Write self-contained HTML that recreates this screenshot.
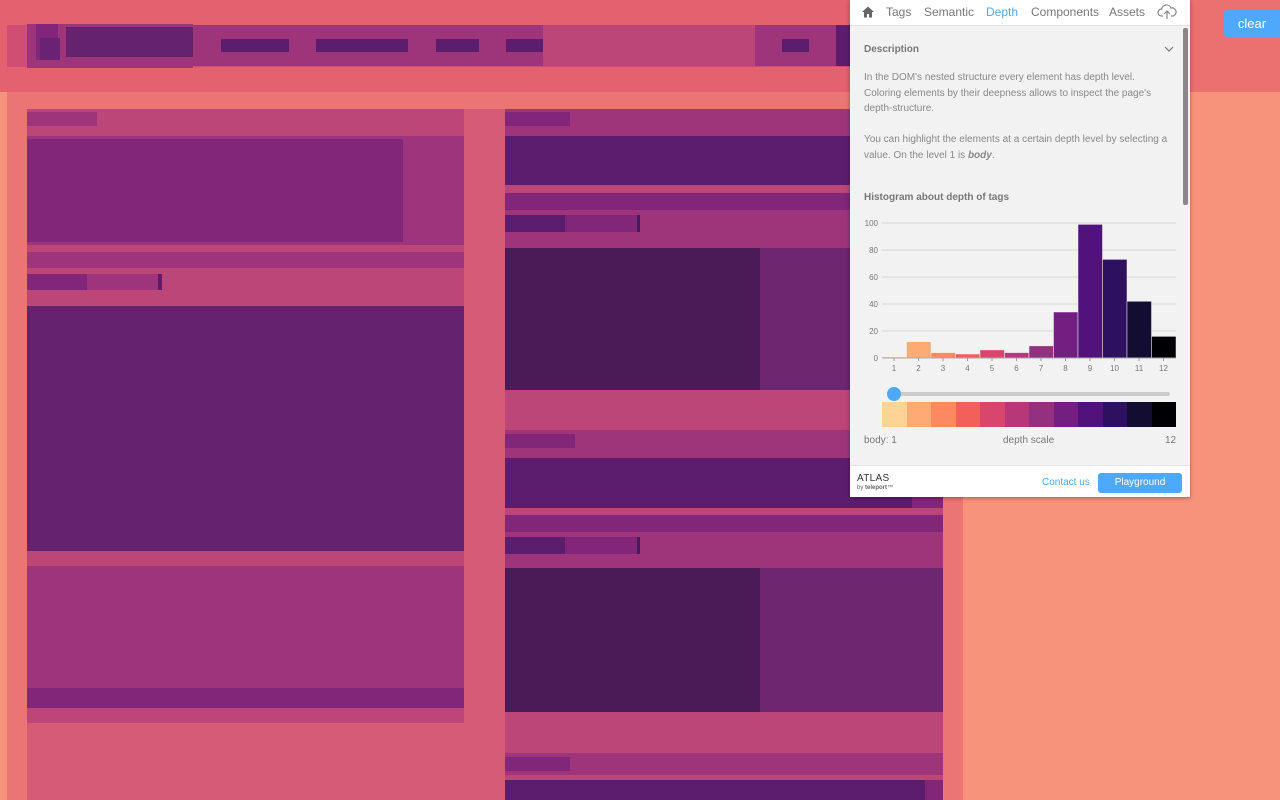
<!DOCTYPE html>
<html><head><meta charset="utf-8"><style>
*{margin:0;padding:0;box-sizing:border-box}
body{width:1280px;height:800px;overflow:hidden;position:relative;background:#f7937a;font-family:"Liberation Sans",Arial,sans-serif}
.a{position:absolute}
.p{position:absolute;font-size:11px;color:#777}
</style></head><body>
<div class="a" style="left:0;top:0;width:1280px;height:92px;background:#eb7070"></div>
<div class="a" style="left:0;top:0;width:850px;height:92px;background:#e4616f"></div>
<div class="a" style="left:7px;top:92px;width:956px;height:708px;background:#eb7474"></div>
<div class="a" style="left:27px;top:109px;width:916px;height:691px;background:#d55b76"></div>
<div class="a" style="left:7px;top:25px;width:843px;height:42px;background:#d04e74"></div>
<div class="a" style="left:27px;top:24px;width:166px;height:44px;background:#9e357b"></div>
<div class="a" style="left:36px;top:24px;width:22px;height:36px;background:#82267a"></div>
<div class="a" style="left:40px;top:38px;width:20px;height:22px;background:#6a2374"></div>
<div class="a" style="left:66px;top:27px;width:128px;height:30px;background:#65226e"></div>
<div class="a" style="left:193px;top:25px;width:350px;height:41px;background:#9e357b"></div>
<div class="a" style="left:221px;top:39px;width:68px;height:13px;background:#5d1d6e"></div>
<div class="a" style="left:316px;top:39px;width:92px;height:13px;background:#5d1d6e"></div>
<div class="a" style="left:436px;top:39px;width:43px;height:13px;background:#5d1d6e"></div>
<div class="a" style="left:506px;top:39px;width:37px;height:13px;background:#5d1d6e"></div>
<div class="a" style="left:543px;top:25px;width:212px;height:41px;background:#bb4677"></div>
<div class="a" style="left:755px;top:25px;width:81px;height:41px;background:#9e357b"></div>
<div class="a" style="left:782px;top:39px;width:27px;height:13px;background:#5d1d6e"></div>
<div class="a" style="left:836px;top:25px;width:14px;height:41px;background:#5d1d6e"></div>
<div class="a" style="left:27px;top:109px;width:437px;height:614px;background:#bb4677"></div>
<div class="a" style="left:27px;top:112px;width:70px;height:14px;background:#9e357b"></div>
<div class="a" style="left:27px;top:136px;width:437px;height:109px;background:#9e357c"></div>
<div class="a" style="left:27px;top:139px;width:376px;height:103px;background:#82267a"></div>
<div class="a" style="left:27px;top:252px;width:437px;height:16px;background:#9e357c"></div>
<div class="a" style="left:27px;top:274px;width:60px;height:16px;background:#82267a"></div>
<div class="a" style="left:87px;top:274px;width:71px;height:16px;background:#9e357c"></div>
<div class="a" style="left:158px;top:274px;width:4px;height:16px;background:#5d1d6e"></div>
<div class="a" style="left:27px;top:306px;width:437px;height:245px;background:#65226e"></div>
<div class="a" style="left:27px;top:566px;width:437px;height:122px;background:#9e357c"></div>
<div class="a" style="left:27px;top:688px;width:437px;height:20px;background:#82267a"></div>
<div class="a" style="left:505px;top:109px;width:438px;height:691px;background:#bb4677"></div>
<div class="a" style="left:505px;top:109px;width:438px;height:27px;background:#9e357b"></div>
<div class="a" style="left:505px;top:112px;width:65px;height:14px;background:#82267a"></div>
<div class="a" style="left:505px;top:136px;width:438px;height:49px;background:#5d1d6e"></div>
<div class="a" style="left:505px;top:193px;width:438px;height:17px;background:#82267a"></div>
<div class="a" style="left:505px;top:210px;width:438px;height:38px;background:#9e357b"></div>
<div class="a" style="left:505px;top:215px;width:60px;height:17px;background:#5d1d6e"></div>
<div class="a" style="left:565px;top:215px;width:72px;height:17px;background:#82267a"></div>
<div class="a" style="left:637px;top:215px;width:3px;height:17px;background:#4a1b57"></div>
<div class="a" style="left:505px;top:248px;width:255px;height:142px;background:#4a1b57"></div>
<div class="a" style="left:760px;top:248px;width:183px;height:142px;background:#6e2670"></div>
<div class="a" style="left:505px;top:430px;width:438px;height:28px;background:#9e357b"></div>
<div class="a" style="left:505px;top:434px;width:70px;height:14px;background:#82267a"></div>
<div class="a" style="left:505px;top:458px;width:438px;height:50px;background:#82267a"></div>
<div class="a" style="left:505px;top:458px;width:407px;height:50px;background:#5d1d6e"></div>
<div class="a" style="left:505px;top:515px;width:438px;height:17px;background:#82267a"></div>
<div class="a" style="left:505px;top:532px;width:438px;height:36px;background:#9e357b"></div>
<div class="a" style="left:505px;top:537px;width:60px;height:17px;background:#5d1d6e"></div>
<div class="a" style="left:565px;top:537px;width:72px;height:17px;background:#82267a"></div>
<div class="a" style="left:637px;top:537px;width:3px;height:17px;background:#4a1b57"></div>
<div class="a" style="left:505px;top:568px;width:255px;height:144px;background:#4a1b57"></div>
<div class="a" style="left:760px;top:568px;width:183px;height:144px;background:#6e2670"></div>
<div class="a" style="left:505px;top:753px;width:438px;height:22px;background:#9e357b"></div>
<div class="a" style="left:505px;top:757px;width:65px;height:14px;background:#82267a"></div>
<div class="a" style="left:505px;top:780px;width:438px;height:20px;background:#82267a"></div>
<div class="a" style="left:505px;top:780px;width:420px;height:20px;background:#5d1d6e"></div>

<div class="a" style="left:1224px;top:10px;width:56px;height:27px;background:#4ea8fc;border-radius:3px 0 0 3px;color:#fff;font-size:13px;line-height:27px;text-align:center">clear</div>

<div class="a" style="left:850px;top:0;width:340px;height:497px;background:#f2f2f2;box-shadow:0 1px 4px rgba(0,0,0,.35)">
 <div class="a" style="left:0;top:0;width:340px;height:26px;background:#fff;border-bottom:1px solid #e4e4e4"></div>
 <svg class="a" style="left:11px;top:5px" width="14" height="14" viewBox="0 0 14 14"><path d="M7 1.5 L1 7 H3 V12.5 H6 V9 H8 V12.5 H11 V7 H13 Z" fill="#666"/></svg>
 <div class="a" style="left:36px;top:5px;font-size:12px;color:#777">Tags</div>
 <div class="a" style="left:74px;top:5px;font-size:12px;color:#777">Semantic</div>
 <div class="a" style="left:136px;top:5px;font-size:12px;color:#4ea8fc">Depth</div>
 <div class="a" style="left:181px;top:5px;font-size:12px;color:#777">Components</div>
 <div class="a" style="left:259px;top:5px;font-size:12px;color:#777">Assets</div>
 <svg class="a" style="left:307px;top:3px" width="20" height="17" viewBox="0 0 20 17"><path d="M6 13 H4.5 A3.5 3.5 0 0 1 4.5 6 A5 5 0 0 1 14 5 A3.5 3.5 0 0 1 16 13 H14 M10 16 V8 M7 11 L10 8 L13 11" fill="none" stroke="#888" stroke-width="1.2"/></svg>
 <div class="a" style="left:333px;top:28px;width:5px;height:177px;background:#888;border-radius:2px"></div>
 <div class="a" style="left:14px;top:44px;font-size:10px;font-weight:bold;color:#777">Description</div>
 <svg class="a" style="left:314px;top:45px" width="10" height="8" viewBox="0 0 10 8"><path d="M1 2 L5 6 L9 2" fill="none" stroke="#777" stroke-width="1.2"/></svg>
 <div class="a" style="left:14px;top:70px;width:312px;font-size:10px;line-height:15.5px;color:#888">In the DOM's nested structure every element has depth level.<br>Coloring elements by their deepness allows to inspect the page's depth-structure.<br><br>You can highlight the elements at a certain depth level by selecting a value. On the level 1 is <b><i>body</i></b>.</div>
 <div class="a" style="left:14px;top:192px;font-size:10px;font-weight:bold;color:#777">Histogram about depth of tags</div>
 <svg class="a" style="left:0;top:210px" width="340" height="168" viewBox="0 0 340 168">
  <g stroke="#d6d6d6" stroke-width="1">
   <line x1="32" y1="13" x2="326" y2="13"/><line x1="32" y1="40" x2="326" y2="40"/><line x1="32" y1="67" x2="326" y2="67"/><line x1="32" y1="94" x2="326" y2="94"/><line x1="32" y1="121" x2="326" y2="121"/>
  </g>
  <g font-size="8" fill="#777" text-anchor="end" font-family="Liberation Sans,sans-serif">
   <text x="28" y="16">100</text><text x="28" y="43">80</text><text x="28" y="70">60</text><text x="28" y="97">40</text><text x="28" y="124">20</text><text x="28" y="151">0</text>
  </g>
  <g stroke="#f2f2f2" stroke-width="0.5">
   <rect x="32" y="146.6" width="24.5" height="1.4" fill="#fcd595"/>
   <rect x="56.5" y="131.8" width="24.5" height="16.2" fill="#fdaa74"/>
   <rect x="81" y="142.6" width="24.5" height="5.4" fill="#fc8960"/>
   <rect x="105.5" y="144" width="24.5" height="4" fill="#f2605c"/>
   <rect x="130" y="139.9" width="24.5" height="8.1" fill="#d8466d"/>
   <rect x="154.5" y="142.6" width="24.5" height="5.4" fill="#b73779"/>
   <rect x="179" y="135.9" width="24.5" height="12.1" fill="#93307f"/>
   <rect x="203.5" y="102" width="24.5" height="46" fill="#721f81"/>
   <rect x="228" y="14.4" width="24.5" height="133.6" fill="#51127c"/>
   <rect x="252.5" y="49.4" width="24.5" height="98.6" fill="#2d1160"/>
   <rect x="277" y="91.3" width="24.5" height="56.7" fill="#120d31"/>
   <rect x="301.5" y="126.4" width="24.5" height="21.6" fill="#000004"/>
  </g>
  <line x1="32" y1="148" x2="326" y2="148" stroke="#aaa"/>
  <g stroke="#999"><line x1="44" y1="148" x2="44" y2="151"/><line x1="68.5" y1="148" x2="68.5" y2="151"/><line x1="93" y1="148" x2="93" y2="151"/><line x1="117.5" y1="148" x2="117.5" y2="151"/><line x1="142" y1="148" x2="142" y2="151"/><line x1="166.5" y1="148" x2="166.5" y2="151"/><line x1="191" y1="148" x2="191" y2="151"/><line x1="215.5" y1="148" x2="215.5" y2="151"/><line x1="240" y1="148" x2="240" y2="151"/><line x1="264.5" y1="148" x2="264.5" y2="151"/><line x1="289" y1="148" x2="289" y2="151"/><line x1="313.5" y1="148" x2="313.5" y2="151"/></g>
  <g font-size="8" fill="#777" text-anchor="middle" font-family="Liberation Sans,sans-serif">
   <text x="44" y="161">1</text><text x="68.5" y="161">2</text><text x="93" y="161">3</text><text x="117.5" y="161">4</text><text x="142" y="161">5</text><text x="166.5" y="161">6</text><text x="191" y="161">7</text><text x="215.5" y="161">8</text><text x="240" y="161">9</text><text x="264.5" y="161">10</text><text x="289" y="161">11</text><text x="313.5" y="161">12</text>
  </g>
 </svg>
 <div class="a" style="left:44px;top:392px;width:276px;height:4px;background:#ccc;border-radius:2px"></div>
 <div class="a" style="left:37px;top:387px;width:14px;height:14px;background:#4ea8fc;border-radius:50%"></div>
 <div class="a" style="left:32px;top:402px;width:294px;height:25px;display:flex">
  <div style="flex:1;background:#fed395"></div><div style="flex:1;background:#fdaa74"></div><div style="flex:1;background:#fc8960"></div><div style="flex:1;background:#f2605c"></div><div style="flex:1;background:#d8466d"></div><div style="flex:1;background:#b73779"></div><div style="flex:1;background:#93307f"></div><div style="flex:1;background:#721f81"></div><div style="flex:1;background:#51127c"></div><div style="flex:1;background:#2d1160"></div><div style="flex:1;background:#120d31"></div><div style="flex:1;background:#000004"></div>
 </div>
 <div class="p" style="left:14px;top:435px;font-size:10px">body: 1</div>
 <div class="p" style="left:153px;top:435px;font-size:10px">depth scale</div>
 <div class="p" style="left:315px;top:435px;font-size:10px">12</div>
 <div class="a" style="left:0;top:465px;width:340px;height:32px;background:#fff;border-top:1px solid #e4e4e4"></div>
 <div class="a" style="left:7px;top:473px;font-size:10px;color:#333;letter-spacing:.3px">ATLAS</div>
 <div class="a" style="left:7px;top:485px;font-size:6px;color:#666">by <b>teleport</b>™</div>
 <div class="a" style="left:192px;top:477px;font-size:10px;color:#4ea8fc">Contact us</div>
 <div class="a" style="left:248px;top:473px;width:84px;height:20px;background:#4ea8fc;border-radius:3px;color:#fff;font-size:10px;line-height:20px;text-align:center">Playground</div>
</div>
</body></html>
